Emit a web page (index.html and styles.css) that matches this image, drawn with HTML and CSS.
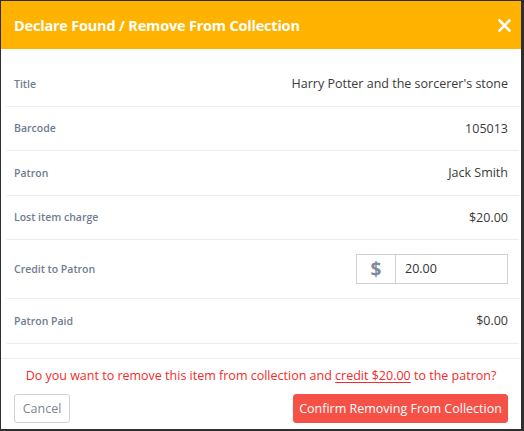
FILE: index.html
```html
<!DOCTYPE html>
<html>
<head>
<meta charset="utf-8">
<link rel="stylesheet" href="styles.css">
</head>
<body>
<div class="modal">
  <div class="modal-header">
    <h1 class="modal-title">Declare Found / Remove From Collection</h1>
    <button class="close" aria-label="Close">
      <svg width="13" height="13" viewBox="0 0 13 13"><path d="M1.5 1.5L11.5 11.5M11.5 1.5L1.5 11.5" stroke="#fff" stroke-width="2.6" stroke-linecap="square"/></svg>
    </button>
  </div>
  <div class="modal-body">
    <div class="row"><span class="label">Title</span><span class="value">Harry Potter and the sorcerer's stone</span></div>
    <div class="row"><span class="label">Barcode</span><span class="value">105013</span></div>
    <div class="row"><span class="label">Patron</span><span class="value">Jack Smith</span></div>
    <div class="row"><span class="label">Lost item charge</span><span class="value">$20.00</span></div>
    <div class="row row-input"><span class="label">Credit to Patron</span>
      <div class="input-group"><span class="addon">$</span><input class="amount" type="text" value="20.00"></div>
    </div>
    <div class="row"><span class="label">Patron Paid</span><span class="value">$0.00</span></div>
  </div>
  <div class="modal-footer">
    <p class="warning">Do you want to remove this item from collection and <u>credit $20.00</u> to the patron?</p>
    <div class="actions">
      <button class="btn btn-cancel">Cancel</button>
      <button class="btn btn-confirm">Confirm Removing From Collection</button>
    </div>
  </div>
</div>
</body>
</html>
```

FILE: styles.css
```css
html, body {
  margin: 0;
  padding: 0;
}
body {
  background: #2e2e2e;
  font-family: "Open Sans", "Noto Sans", sans-serif;
  width: 524px;
  height: 431px;
  overflow: hidden;
}
.modal {
  margin: 1px 2px 2px 1px;
  width: 520px;
  height: 428px;
  background: #fff;
  display: flex;
  flex-direction: column;
}
.modal-header {
  height: 48px;
  background: #ffb300;
  display: flex;
  align-items: center;
  justify-content: space-between;
  padding: 0 10px 0 13px;
  flex: none;
}
.modal-title {
  margin: 0;
  color: #fff;
  font-size: 14.5px;
  font-weight: 700;
  letter-spacing: -0.2px;
}
.close {
  border: 0;
  background: none;
  padding: 0;
  width: 13px;
  height: 13px;
  display: flex;
}
.modal-body {
  padding: 13px 2px 14px 6px;
  border-bottom: 1px solid #eeeeee;
  flex: none;
}
.row {
  display: flex;
  align-items: center;
  justify-content: space-between;
  height: 43.5px;
  padding: 0 11px 0 7px;
  border-bottom: 1px solid #ececec;
}
.row-input {
  height: 58px;
}
.label {
  font-size: 10.5px;
  font-weight: 600;
  color: #6f7d8f;
}
.value {
  font-size: 12.5px;
  color: #3a3a3a;
}
.input-group {
  display: flex;
  width: 152px;
  height: 30px;
  border: 1px solid #d0d0d0;
  box-sizing: border-box;
}
.addon {
  width: 38px;
  flex: none;
  border-right: 1px solid #d0d0d0;
  display: flex;
  align-items: center;
  justify-content: center;
  color: #7c8a9a;
  font-size: 19px;
  font-weight: 700;
}
.amount {
  border: 0;
  outline: none;
  min-width: 0;
  flex: 1;
  padding: 0 0 1px 9px;
  font-family: "Open Sans", sans-serif;
  font-size: 12.5px;
  color: #333;
}
.modal-footer {
  padding: 8px 13px 8px 13px;
  flex: 1;
  display: flex;
  flex-direction: column;
}
.warning {
  margin: 0;
  text-align: center;
  color: #f52a2a;
  font-size: 12.5px;
  line-height: 18px;
}
.warning u {
  text-decoration-thickness: 1px;
  text-underline-offset: 2px;
}
.actions {
  margin-top: 9px;
  display: flex;
  justify-content: space-between;
}
.btn {
  height: 29px;
  border-radius: 3px;
  font-family: "Open Sans", sans-serif;
  font-size: 12.5px;
  padding: 0;
  white-space: nowrap;
}
.btn-cancel {
  width: 56px;
  background: #fff;
  border: 1px solid #cfd3d7;
  color: #7d8790;
}
.btn-confirm {
  width: 215px;
  background: #f55147;
  border: 1px solid #f55147;
  color: #fff;
}
```
